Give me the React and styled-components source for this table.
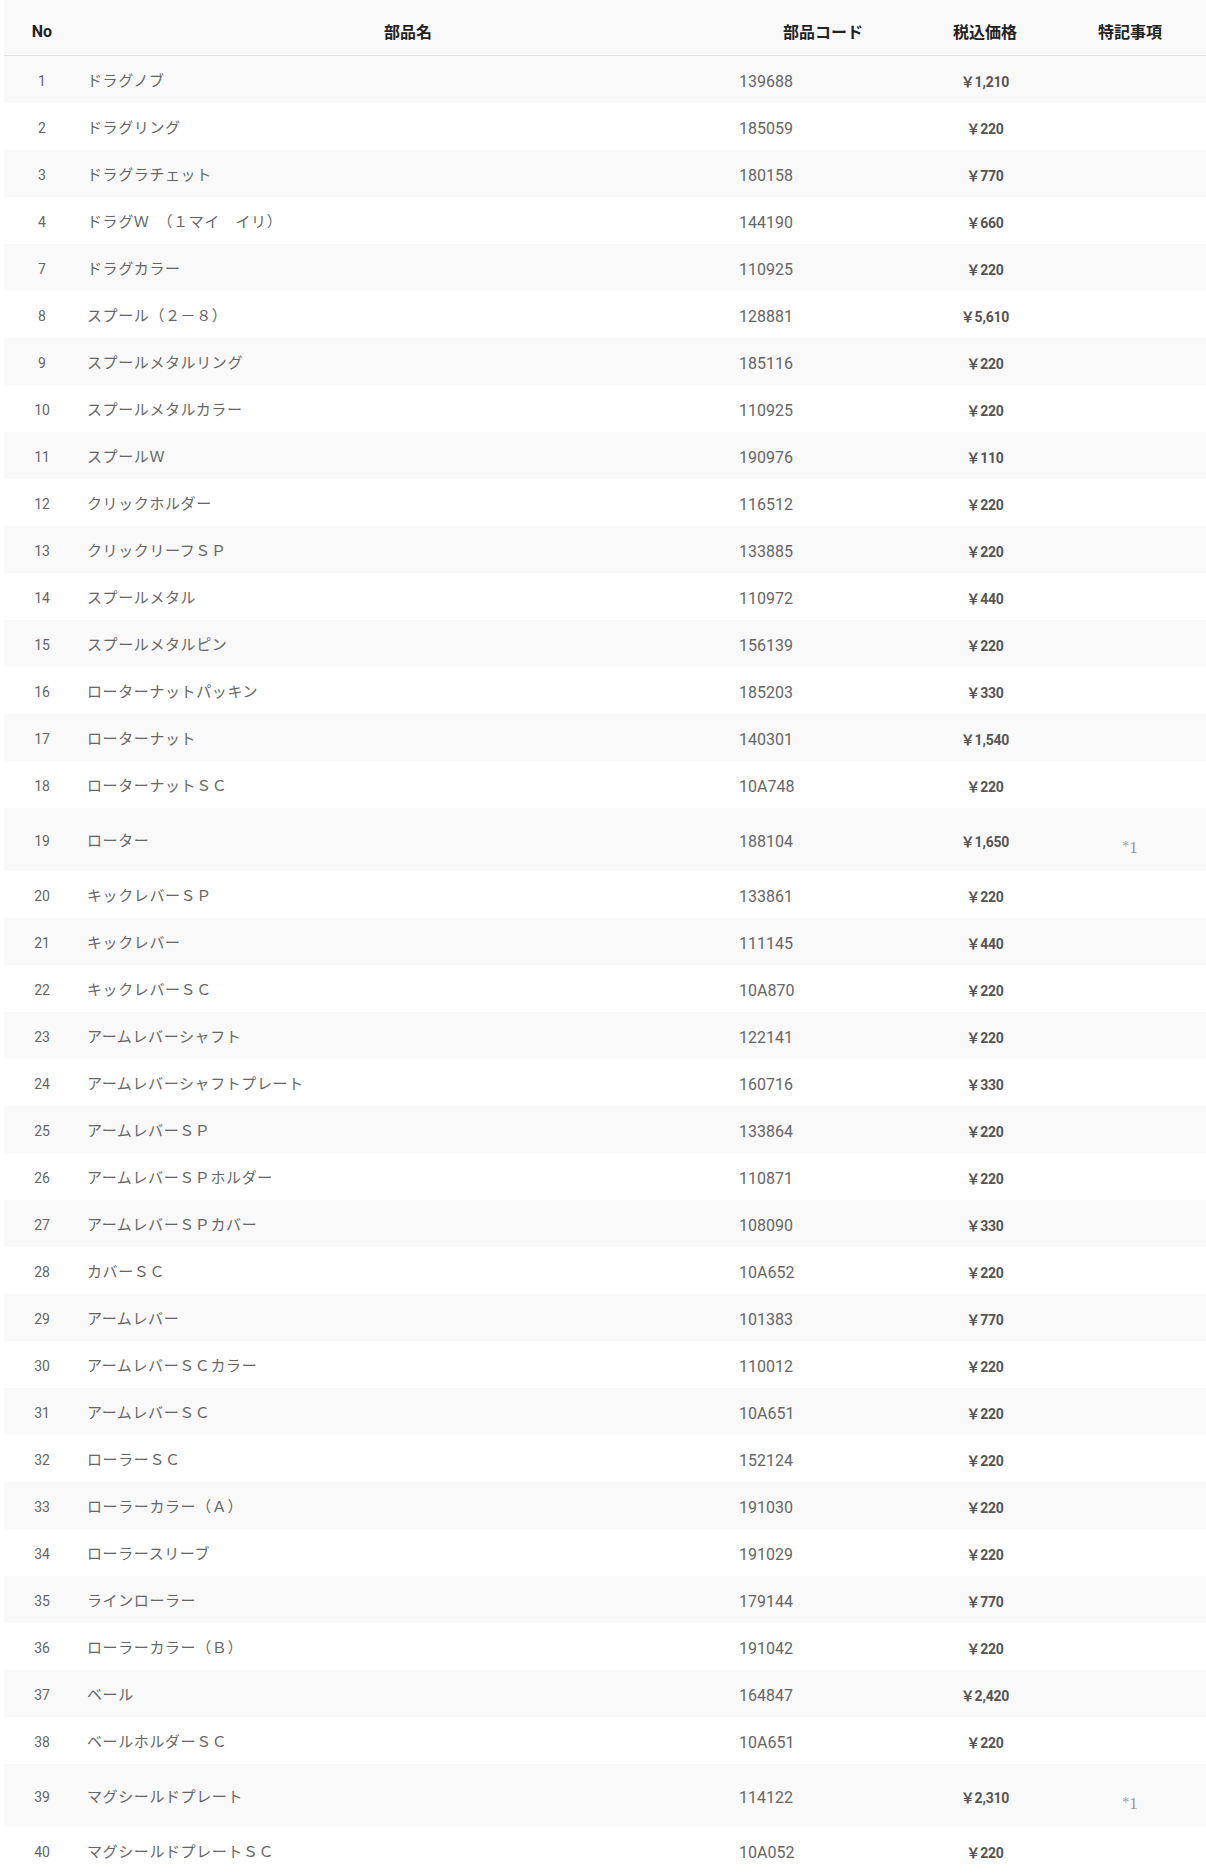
import React from "react";
import styled, { createGlobalStyle } from "styled-components";

const GlobalStyle = createGlobalStyle`
  html, body {
    margin: 0;
    padding: 0;
    background: #fff;
    overflow: hidden;
  }
`;

const COLUMNS = "76px 650px 186px 138px 152px";

const parts = [
  ["1", "ドラグノブ", "139688", "1,210"],
  ["2", "ドラグリング", "185059", "220"],
  ["3", "ドラグラチェット", "180158", "770"],
  ["4", "ドラグＷ　（１マイ　イリ）", "144190", "660"],
  ["7", "ドラグカラー", "110925", "220"],
  ["8", "スプール（２－８）", "128881", "5,610"],
  ["9", "スプールメタルリング", "185116", "220"],
  ["10", "スプールメタルカラー", "110925", "220"],
  ["11", "スプールＷ", "190976", "110"],
  ["12", "クリックホルダー", "116512", "220"],
  ["13", "クリックリーフＳＰ", "133885", "220"],
  ["14", "スプールメタル", "110972", "440"],
  ["15", "スプールメタルピン", "156139", "220"],
  ["16", "ローターナットパッキン", "185203", "330"],
  ["17", "ローターナット", "140301", "1,540"],
  ["18", "ローターナットＳＣ", "10A748", "220"],
  ["19", "ローター", "188104", "1,650", "*1"],
  ["20", "キックレバーＳＰ", "133861", "220"],
  ["21", "キックレバー", "111145", "440"],
  ["22", "キックレバーＳＣ", "10A870", "220"],
  ["23", "アームレバーシャフト", "122141", "220"],
  ["24", "アームレバーシャフトプレート", "160716", "330"],
  ["25", "アームレバーＳＰ", "133864", "220"],
  ["26", "アームレバーＳＰホルダー", "110871", "220"],
  ["27", "アームレバーＳＰカバー", "108090", "330"],
  ["28", "カバーＳＣ", "10A652", "220"],
  ["29", "アームレバー", "101383", "770"],
  ["30", "アームレバーＳＣカラー", "110012", "220"],
  ["31", "アームレバーＳＣ", "10A651", "220"],
  ["32", "ローラーＳＣ", "152124", "220"],
  ["33", "ローラーカラー（Ａ）", "191030", "220"],
  ["34", "ローラースリーブ", "191029", "220"],
  ["35", "ラインローラー", "179144", "770"],
  ["36", "ローラーカラー（Ｂ）", "191042", "220"],
  ["37", "ベール", "164847", "2,420"],
  ["38", "ベールホルダーＳＣ", "10A651", "220"],
  ["39", "マグシールドプレート", "114122", "2,310", "*1"],
  ["40", "マグシールドプレートＳＣ", "10A052", "220"],
];

const Table = styled.div`
  margin-left: 4px;
  width: 1202px;
  border-bottom: 1px solid #f0f0f0;
`;

const HeadRow = styled.div`
  display: grid;
  grid-template-columns: ${COLUMNS};
  align-items: center;
  height: 56px;
  padding-top: 7px;
  box-sizing: border-box;
  background: #f9f9f9;
  border-bottom: 1px solid #e4e4e4;
`;

const HeadCell = styled.div`
  text-align: center;
  padding-left: ${(props) => props.$shift || 0}px;
  font-family: Roboto, "Noto Sans CJK JP", sans-serif;
  font-weight: 700;
  font-size: 16px;
  color: #222;
`;

const Row = styled.div`
  display: grid;
  grid-template-columns: ${COLUMNS};
  align-items: center;
  min-height: 47px;
  background: ${(props) => (props.$striped ? "#f9f9f9" : "#fff")};
`;

const NoCell = styled.div`
  text-align: center;
  padding-top: 2px;
  font-family: Roboto, sans-serif;
  font-size: 14px;
  color: #666;
`;

const NameCell = styled.div`
  padding-left: 7px;
  font-family: "Noto Sans CJK JP", sans-serif;
  font-size: 15px;
  letter-spacing: 0.04em;
  color: #666;
`;

const CodeCell = styled.div`
  padding: 3px 0 0 9px;
  font-family: Roboto, sans-serif;
  font-size: 16px;
  color: #666;
`;

const PriceCell = styled.div`
  text-align: center;
  padding-top: 2px;
  font-family: Roboto, "Noto Sans CJK JP", sans-serif;
  font-weight: 700;
  font-size: 14px;
  letter-spacing: -0.2px;
  color: #555;
`;

const NoteCell = styled.div`
  text-align: center;
  padding: 24px 0 8px;
  line-height: 30px;
  font-family: "Liberation Serif", serif;
  font-size: 17px;
  color: #999;
`;

const Asterisk = styled.span`
  font-size: 14px;
  vertical-align: 2px;
`;

const PartsTable = () => (
  <Table>
    <HeadRow>
      <HeadCell>No</HeadCell>
      <HeadCell $shift={6}>部品名</HeadCell>
      <HeadCell>部品コード</HeadCell>
      <HeadCell>税込価格</HeadCell>
      <HeadCell>特記事項</HeadCell>
    </HeadRow>
    {parts.map(([no, name, code, price, note], i) => (
      <Row key={no} $striped={i % 2 === 0}>
        <NoCell>{no}</NoCell>
        <NameCell>{name}</NameCell>
        <CodeCell>{code}</CodeCell>
        <PriceCell>￥{price}</PriceCell>
        {note ? (
          <NoteCell>
            <Asterisk>*</Asterisk>1
          </NoteCell>
        ) : (
          <div />
        )}
      </Row>
    ))}
  </Table>
);

export default function App() {
  return (
    <>
      <GlobalStyle />
      <PartsTable />
    </>
  );
}
